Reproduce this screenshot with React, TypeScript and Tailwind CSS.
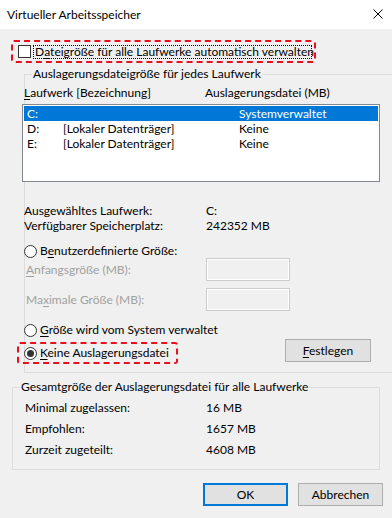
import type { ReactNode } from 'react';

// access-key underline, like the Win32 dialogs
function U({ children }: { children: ReactNode }) {
  return <span className="underline underline-offset-[2px] decoration-1">{children}</span>;
}

function Radio({ checked = false }: { checked?: boolean }) {
  return (
    <span className="w-[13px] h-[13px] shrink-0 rounded-full border border-[#333333] bg-white flex items-center justify-center">
      {checked && <span className="w-[7px] h-[7px] rounded-full bg-[#333333]" />}
    </span>
  );
}

function DisabledInput() {
  return <div className="w-[84px] h-[23px] border border-[#cccccc] bg-[#f0f0f0] shadow-[inset_0_0_0_1px_#ffffff]" />;
}

const drives = [
  { letter: 'C:', label: '', size: 'Systemverwaltet', selected: true },
  { letter: 'D:', label: '[Lokaler Datenträger]', size: 'Keine', selected: false },
  { letter: 'E:', label: '[Lokaler Datenträger]', size: 'Keine', selected: false },
];

const totals = [
  ['Minimal zugelassen:', '16 MB'],
  ['Empfohlen:', '1657 MB'],
  ['Zurzeit zugeteilt:', '4608 MB'],
];

export default function App() {
  return (
    <div className="w-[392px] h-[518px] overflow-hidden bg-[#f0f0f0] text-[12px] text-black font-['Lato','Noto_Sans',sans-serif]">
      {/* Title bar */}
      <div className="h-[29px] bg-white flex items-center justify-between pl-[7px] pr-[9px]">
        <span>Virtueller Arbeitsspeicher</span>
        <svg width="10" height="10" viewBox="0 0 10 10" className="mt-[-1px]">
          <path d="M0.5 0.5 L9.5 9.5 M9.5 0.5 L0.5 9.5" stroke="#000" strokeWidth="1" />
        </svg>
      </div>

      {/* Automatic checkbox, highlighted */}
      <div className="pt-[11px] pl-[11px]">
        <div className="w-[305px] h-[23px] border-2 border-dashed border-[#e8101c] rounded-[3px] flex items-center pl-[5px]">
          <span className="w-[13px] h-[13px] border border-[#333333] bg-white shrink-0" />
          <span className="ml-[2px] w-[279px] h-[14px] border border-dotted border-black px-[1px] leading-[12px] flex items-center whitespace-nowrap">
            D<U>a</U>teigröße für alle Laufwerke automatisch verwalten
          </span>
        </div>
      </div>

      {/* Per-drive group */}
      <fieldset className="ml-[24px] mt-[4px] w-[380px] border border-[#dcdcdc] pb-[8px]">
        <legend className="ml-[7px] px-[1px] leading-[14px] whitespace-nowrap">Auslagerungsdateigröße für jedes Laufwerk</legend>

        <div className="mt-[4px] h-[16px] leading-[16px] flex -ml-[1px]">
          <span className="w-[181px]">
            <U>L</U>aufwerk [Bezeichnung]
          </span>
          <span>Auslagerungsdatei (MB)</span>
        </div>

        <div className="mt-[3px] -ml-[3px] w-[358px] h-[78px] border border-[#828790] bg-white p-[1px]">
          {drives.map((d) => (
            <div
              key={d.letter}
              className={`h-[15px] leading-[15px] flex ${d.selected ? 'bg-[#0078d7] text-white' : ''}`}
            >
              <span className="w-[39px] pl-[3px]">{d.letter}</span>
              <span className="w-[176px]">{d.label}</span>
              <span>{d.size}</span>
            </div>
          ))}
        </div>

        <div className="mt-[21px] -ml-[1px]">
          <div className="h-[15px] leading-[15px] flex">
            <span className="w-[182px]">Ausgewähltes Laufwerk:</span>
            <span>C:</span>
          </div>
          <div className="h-[15px] leading-[15px] flex">
            <span className="w-[182px]">Verfügbarer Speicherplatz:</span>
            <span>242352 MB</span>
          </div>
        </div>

        <div className="mt-[10px] -ml-[1px] h-[16px] flex items-center gap-[3px]">
          <Radio />
          <span>
            B<U>e</U>nutzerdefinierte Größe:
          </span>
        </div>

        <div className="mt-[-1px] h-[23px] flex items-center text-[#a0a0a0]">
          <span className="w-[181px] pl-[1px]">
            <U>A</U>nfangsgröße (MB):
          </span>
          <DisabledInput />
        </div>
        <div className="mt-[7px] h-[23px] flex items-center text-[#a0a0a0]">
          <span className="w-[181px] pl-[1px]">
            Ma<U>x</U>imale Größe (MB):
          </span>
          <DisabledInput />
        </div>

        <div className="mt-[11px] -ml-[1px] h-[16px] flex items-center gap-[3px]">
          <Radio />
          <span>
            <U>G</U>röße wird vom System verwaltet
          </span>
        </div>

        <div className="flex items-start">
          <div className="mt-[4px] -ml-[8px] w-[161px] h-[22px] border-2 border-dashed border-[#e8101c] rounded-[3px] flex items-center gap-[3px] pl-[5px]">
            <Radio checked />
            <span className="whitespace-nowrap">
              <U>K</U>eine Auslagerungsdatei
            </span>
          </div>
          <button className="mt-[1px] ml-[107px] w-[86px] h-[23px] border border-[#adadad] bg-[#e1e1e1] leading-[21px]">
            <U>F</U>estlegen
          </button>
        </div>
      </fieldset>

      {/* Totals group */}
      <fieldset className="ml-[12px] mt-[7px] w-[368px] border border-[#dcdcdc] pb-[9px] pl-[12px]">
        <legend className="ml-[-5px] px-[1px] leading-[14px] whitespace-nowrap">
          Gesamtgröße der Auslagerungsdatei für alle Laufwerke
        </legend>
        <div className="mt-[3px]">
          {totals.map(([k, v]) => (
            <div key={k} className="h-[21px] leading-[21px] flex">
              <span className="w-[181px]">{k}</span>
              <span>{v}</span>
            </div>
          ))}
        </div>
      </fieldset>

      {/* Dialog buttons */}
      <div className="mt-[13px] pr-[9px] flex justify-end gap-[10px]">
        <button className="w-[85px] h-[23px] border-2 border-[#0078d7] bg-[#e1e1e1] leading-[19px]">OK</button>
        <button className="w-[85px] h-[23px] border border-[#adadad] bg-[#e1e1e1] leading-[21px]">Abbrechen</button>
      </div>
    </div>
  );
}
